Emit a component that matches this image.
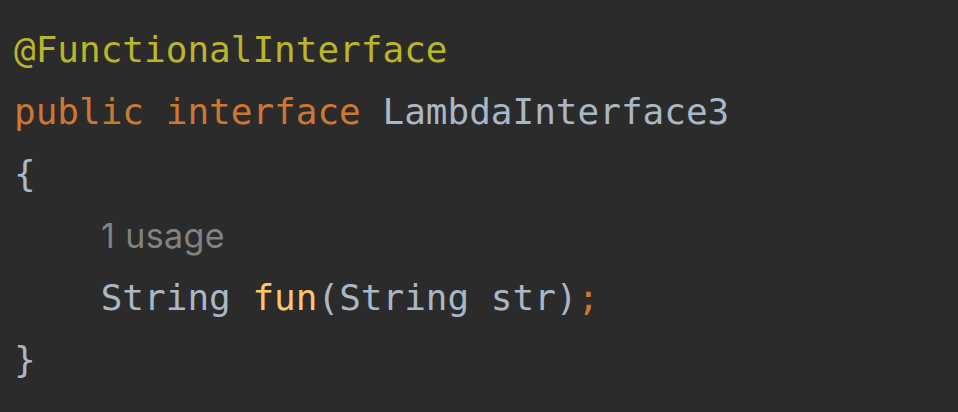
import React from "react";

const mono = { fontFamily: '"DejaVu Sans Mono", "Liberation Mono", monospace' };

export default function App() {
  return (
    <div className="w-[958px] h-[412px] bg-[#2b2b2b] overflow-hidden pl-[14px] pt-[19px]">
      <div className="text-[36px] leading-[62px] text-[#a9b7c6] whitespace-pre" style={mono}>
        <div className="text-[#bbb529]">@FunctionalInterface</div>
        <div>
          <span className="text-[#cc7832]">public interface </span>
          <span>LambdaInterface3</span>
        </div>
        <div>{"{"}</div>
        <div
          className="pl-[87px] text-[34px] tracking-[0.4px] text-[#828282]"
          style={{ fontFamily: 'Inter, "Noto Sans", sans-serif' }}
        >
          1 usage
        </div>
        <div>
          {"    String "}
          <span className="text-[#ffc66d]">fun</span>
          {"(String str)"}
          <span className="text-[#cc7832]">;</span>
        </div>
        <div>{"}"}</div>
      </div>
    </div>
  );
}
